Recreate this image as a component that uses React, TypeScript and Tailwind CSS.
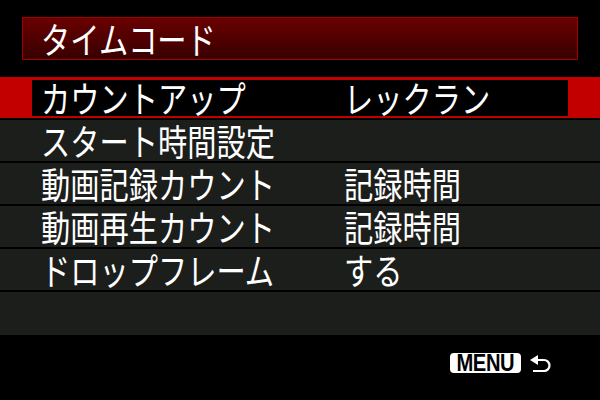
import React from "react";

function T({ children }: { children: React.ReactNode }) {
  return (
    <span className="inline-block origin-left scale-x-[0.86] scale-y-[1.08] whitespace-nowrap text-[34px] leading-none">
      {children}
    </span>
  );
}

const rows: [string, string][] = [
  ["スタート時間設定", ""],
  ["動画記録カウント", "記録時間"],
  ["動画再生カウント", "記録時間"],
  ["ドロップフレーム", "する"],
];

export default function App() {
  return (
    <div className="w-[600px] h-[400px] bg-black flex flex-col text-white font-['Noto_Sans_CJK_JP','Noto_Sans',sans-serif] overflow-hidden">
      <div className="mt-[17px] mx-[22px] h-[43px] border border-[#a40000] bg-linear-to-b from-[#6a0000] to-[#380000] flex items-center pl-[18px]">
        <T>タイムコード</T>
      </div>
      <div className="mt-[17px] h-[258px] bg-[#1c1e1c] flex flex-col">
        <div className="h-[43px] border-b-2 border-black bg-[#c20000] pt-[3px] pb-[2px] px-[32px]">
          <div className="h-full bg-black grid grid-cols-[303px_1fr] items-center pl-[9px]">
            <T>カウントアップ</T>
            <T>レックラン</T>
          </div>
        </div>
        {rows.map(([a, b]) => (
          <div
            key={a}
            className="h-[43px] border-b-2 border-black grid grid-cols-[303px_1fr] items-center pl-[41px]"
          >
            <T>{a}</T>
            <T>{b}</T>
          </div>
        ))}
      </div>
      <div className="flex-1 flex items-start pt-[18px] pl-[450px] gap-[8px]">
        <div className="w-[71px] h-[20px] bg-white rounded-[4px] flex items-center justify-center">
          <span className="inline-block scale-x-[0.84] text-black font-bold text-[24px] leading-[20px] font-['Liberation_Sans',sans-serif] tracking-[-0.5px]">
            MENU
          </span>
        </div>
        <svg width="22" height="20" viewBox="0 0 22 20">
          <path d="M1 7 L9 2 L9 12 Z" fill="white" />
          <path d="M8 7 H15 A5.5 5.5 0 0 1 15 18 H4" fill="none" stroke="white" strokeWidth="2.2" />
        </svg>
      </div>
    </div>
  );
}
